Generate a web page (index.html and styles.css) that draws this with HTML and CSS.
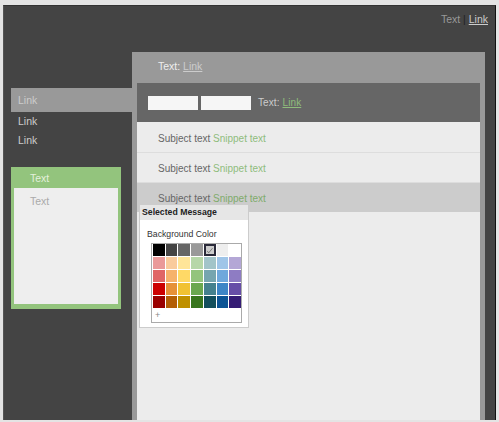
FILE: index.html
```html
<!DOCTYPE html>
<html lang="en">
<head>
  <meta charset="UTF-8">
  <title>Mail theme preview</title>
  <link rel="stylesheet" href="styles.css">
</head>
<body>

  <div class="window">
    <div class="topbar">
      <span class="top-text">Text</span> <span class="top-sep">|</span> <a class="top-link">Link</a>
    </div>

    <div class="columns">
      <div class="sidebar">
        <div class="nav-item active">Link</div>
        <div class="nav-item">Link</div>
        <div class="nav-item">Link</div>

        <div class="green-box">
          <div class="green-title">Text</div>
          <div class="green-body">Text</div>
        </div>
      </div>

      <div class="panel">
        <div class="panel-head">Text: <a class="head-link">Link</a></div>
        <div class="panel-inner">
          <div class="toolbar">
            <div class="fake-input"></div>
            <div class="fake-input"></div>
            <span class="toolbar-text">Text: <a class="toolbar-link">Link</a></span>
          </div>
          <div class="row">Subject text <span class="snippet">Snippet text</span></div>
          <div class="row">Subject text <span class="snippet">Snippet text</span></div>
          <div class="row selected">Subject text <span class="snippet">Snippet text</span></div>
        </div>
      </div>
    </div>

    <div class="popup">
      <div class="popup-title">Selected Message</div>
      <div class="popup-label">Background Color</div>
      <div class="palette">
        <div class="swatches">
          <div class="swatch g1"></div><div class="swatch g2"></div><div class="swatch g3"></div><div class="swatch g4"></div>
          <div class="swatch g5 current">
            <svg viewBox="0 0 10 10" width="9" height="9"><path d="M1.5 5.5 L3.5 8 L8.5 2" fill="none" stroke="#666" stroke-width="1"/></svg>
          </div>
          <div class="swatch g6"></div><div class="swatch g7"></div>

          <div class="swatch a1"></div><div class="swatch a2"></div><div class="swatch a3"></div><div class="swatch a4"></div><div class="swatch a5"></div><div class="swatch a6"></div><div class="swatch a7"></div>
          <div class="swatch b1"></div><div class="swatch b2"></div><div class="swatch b3"></div><div class="swatch b4"></div><div class="swatch b5"></div><div class="swatch b6"></div><div class="swatch b7"></div>
          <div class="swatch c1"></div><div class="swatch c2"></div><div class="swatch c3"></div><div class="swatch c4"></div><div class="swatch c5"></div><div class="swatch c6"></div><div class="swatch c7"></div>
          <div class="swatch d1"></div><div class="swatch d2"></div><div class="swatch d3"></div><div class="swatch d4"></div><div class="swatch d5"></div><div class="swatch d6"></div><div class="swatch d7"></div>
        </div>
        <div class="add-color">+</div>
      </div>
    </div>
  </div>

</body>
</html>
```

FILE: styles.css
```css
body {
  margin: 0;
  height: 422px;
  overflow: hidden;
  background-color: #e4e4e4;
  font-family: "Liberation Sans", Arial, sans-serif;
  font-size: 10.5px;
}

.window {
  position: relative;
  box-sizing: border-box;
  width: 493px;
  height: 415px;
  margin: 5px 0 0 3px;
  background: #444;
  border-top: 1px solid #333;
  border-left: 1px solid #555;
  border-right: 1px solid #111;
}

.topbar {
  height: 46px;
  box-sizing: border-box;
  padding: 7px 7px 0 0;
  text-align: right;
  line-height: 12px;
  color: #ccc;
}

.top-text {
  color: #999;
}

.top-sep {
  color: #222;
}

.top-link {
  color: #ccc;
  text-decoration: underline;
}

.columns {
  display: flex;
  height: 368px;
}

.sidebar {
  width: 128px;
  box-sizing: border-box;
  padding: 36px 0 0 7px;
}

.nav-item {
  height: 19px;
  line-height: 19px;
  padding-left: 7px;
  color: #ccc;
}

.nav-item.active {
  height: 24px;
  line-height: 24px;
  background: #999;
  color: #ccc;
}

.green-box {
  width: 110px;
  height: 142px;
  box-sizing: border-box;
  margin-top: 17px;
  padding: 0 3px 5px;
  background: #93c47d;
}

.green-title {
  height: 21px;
  line-height: 23px;
  padding-left: 16px;
  color: #e4f0dc;
}

.green-body {
  height: 116px;
  box-sizing: border-box;
  padding: 7px 0 0 16px;
  background: #eee;
  color: #aaa;
}

.panel {
  width: 353px;
  height: 368px;
  box-sizing: border-box;
  padding: 0 5px;
  background: #999;
}

.panel-head {
  height: 31px;
  line-height: 28px;
  padding-left: 21px;
  color: #eee;
}

.head-link {
  color: #ccc;
  text-decoration: underline;
}

.panel-inner {
  height: 337px;
  background: #ececec;
}

.toolbar {
  display: flex;
  align-items: center;
  height: 39px;
  margin-bottom: 1px;
  padding-left: 11px;
  background: #666;
}

.fake-input {
  width: 50px;
  height: 14px;
  margin-right: 3px;
  background: #f6f6f6;
}

.toolbar-text {
  margin-left: 4px;
  font-size: 10px;
  letter-spacing: 0.1px;
  color: #ccc;
}

.toolbar-link {
  color: #8fbc7c;
  text-decoration: underline;
}

.row {
  box-sizing: border-box;
  height: 30px;
  line-height: 31px;
  padding-left: 21px;
  border-bottom: 1px solid #ddd;
  font-size: 10px;
  color: #666;
}

.row.selected {
  height: 29px;
  background: #ccc;
  border-bottom: none;
}

.snippet {
  color: #8fbc7c;
}

.selected .snippet {
  color: #7fab6b;
}

.popup {
  position: absolute;
  left: 135px;
  top: 199px;
  width: 110px;
  height: 123px;
  box-sizing: border-box;
  background: #fff;
  border: 1px solid #ccc;
  border-top: none;
}

.popup-title {
  height: 15px;
  line-height: 15px;
  padding-left: 2px;
  background: #e6e6e6;
  color: #222;
  font-size: 8.7px;
  font-weight: bold;
}

.popup-label {
  margin: 8px 0 0 7px;
  line-height: 12px;
  font-size: 8.7px;
  color: #333;
}

.palette {
  box-sizing: border-box;
  width: 91px;
  height: 80px;
  margin: 3px 0 0 11px;
  border: 1px solid #aaa;
}

.swatches {
  display: grid;
  grid-template-columns: repeat(7, 1fr);
  grid-auto-rows: 12px;
  gap: 1px;
  padding: 0 0 0 1px;
}

.swatch {
  box-sizing: border-box;
}

.swatch.current {
  display: flex;
  align-items: center;
  justify-content: center;
  border: 2px solid #2a2a3a;
  overflow: hidden;
}

.g1 { background: #000; }
.g2 { background: #444; }
.g3 { background: #666; }
.g4 { background: #999; }
.g5 { background: #ccc; }
.g6 { background: #eee; }
.g7 { background: #fff; }

.a1 { background: #ea9999; }
.a2 { background: #f9cb9c; }
.a3 { background: #ffe599; }
.a4 { background: #b6d7a8; }
.a5 { background: #a2c4c9; }
.a6 { background: #9fc5e8; }
.a7 { background: #b4a7d6; }

.b1 { background: #e06666; }
.b2 { background: #f6b26b; }
.b3 { background: #ffd966; }
.b4 { background: #93c47d; }
.b5 { background: #76a5af; }
.b6 { background: #6fa8dc; }
.b7 { background: #8e7cc3; }

.c1 { background: #cc0000; }
.c2 { background: #e69138; }
.c3 { background: #f1c232; }
.c4 { background: #6aa84f; }
.c5 { background: #45818e; }
.c6 { background: #3d85c6; }
.c7 { background: #674ea7; }

.d1 { background: #990000; }
.d2 { background: #b45f06; }
.d3 { background: #bf9000; }
.d4 { background: #38761d; }
.d5 { background: #134f5c; }
.d6 { background: #0b5394; }
.d7 { background: #351c75; }

.add-color {
  padding-left: 3px;
  line-height: 14px;
  font-size: 9px;
  color: #888;
}
```
